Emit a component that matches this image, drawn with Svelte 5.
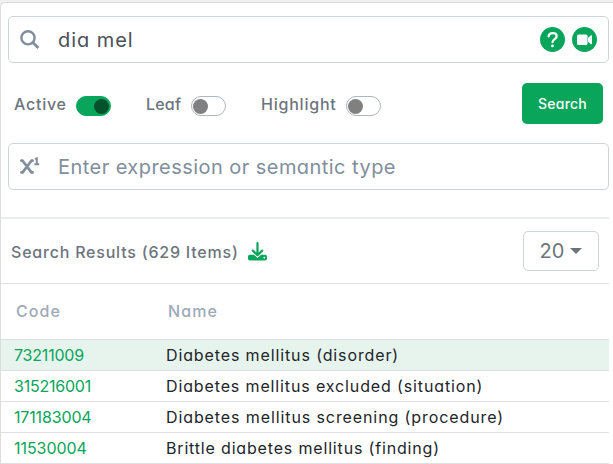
<script>
  let toggles = $state([
    { label: 'Active', on: true, w: 52, gap: 35, ls: 0.75 },
    { label: 'Leaf', on: false, w: 35, gap: 35, ls: 0.2 },
    { label: 'Highlight', on: false, w: 75, gap: 0, ls: 0.78 }
  ]);
  const rows = [
    { code: '73211009', name: 'Diabetes mellitus (disorder)', cs: -0.2, ns: 0.88 },
    { code: '315216001', name: 'Diabetes mellitus excluded (situation)', cs: -0.22, ns: 0.87 },
    { code: '171183004', name: 'Diabetes mellitus screening (procedure)', cs: -0.15, ns: 0.9 },
    { code: '11530004', name: 'Brittle diabetes mellitus (finding)', cs: -0.05, ns: 0.83 }
  ];
</script>

<main>
  <section class="card">
    <div class="field">
      <svg class="lead" width="20" height="20" viewBox="0 0 20 20" fill="none" stroke="#808e9d" stroke-width="2.4">
        <circle cx="8" cy="7.8" r="6.6" /><path d="M12.8 12.6L18.4 18.1" stroke-width="2.8" />
      </svg>
      <span class="value query">dia mel</span>
      <div class="actions">
        <svg width="25" height="25" viewBox="0 0 25 25">
          <circle cx="12.5" cy="12.5" r="12.5" fill="#08a55b" />
          <path d="M8.6 9.3C8.9 5.4 16.5 4.8 16.7 9.2C16.8 12 12.5 12.1 12.5 15.2" fill="none" stroke="#fff" stroke-width="2.2" stroke-linecap="round" />
          <circle cx="12.5" cy="18.9" r="1.4" fill="#fff" />
        </svg>
        <svg width="25" height="25" viewBox="0 0 25 25">
          <circle cx="12.5" cy="12.5" r="12.5" fill="#08a55b" />
          <rect x="5" y="7.5" width="10.5" height="10.5" rx="1.6" fill="#fff" />
          <path d="M16 10.8L18.7 8.4Q20 7.7 20 9V16.5Q20 17.8 18.7 17L16 14.8Z" fill="#fff" />
        </svg>
      </div>
    </div>

    <div class="filters">
      {#each toggles as t}
        <button class="toggle" style:margin-right="{t.gap}px" onclick={() => (t.on = !t.on)}>
          <span class="label" style:width="{t.w}px" style:letter-spacing="{t.ls}px">{t.label}</span>
          <span class="switch" class:on={t.on}><i></i></span>
        </button>
      {/each}
      <button class="search">Search</button>
    </div>

    <div class="field">
      <svg class="lead" width="20" height="20" viewBox="0 0 20 20" fill="none" stroke="#808e9d">
        <path d="M1.4 3.7H2.6L11.4 15.4H12.6M1.4 15.4H2.6L11.4 3.7H12.6" stroke-width="2.7" stroke-linejoin="round" stroke-linecap="round" />
        <path d="M15 2.2L16.8 1.4V7M14.4 7.2H19.2" stroke-width="2" />
      </svg>
      <span class="value placeholder">Enter expression or semantic type</span>
    </div>

    <div class="results">
      <span class="title">Search Results (629 Items)</span>
      <svg width="19" height="19" viewBox="0 0 19 19">
        <path d="M2 12.8H6L9.5 16L13 12.8H17A2 2 0 0 1 19 14.8V16.5A2 2 0 0 1 17 18.5H2A2 2 0 0 1 0 16.5V14.8A2 2 0 0 1 2 12.8Z" fill="#08a55b" />
        <circle cx="16.3" cy="15.6" r=".9" fill="#fff" />
        <path d="M9.5 1.2V12.8M4.8 8.6L9.5 13.2L14.2 8.6" fill="none" stroke="#08a55b" stroke-width="2.2" stroke-linecap="round" stroke-linejoin="round" />
      </svg>
      <button class="size"><span>20</span><i></i></button>
    </div>

    <div class="row head"><span>Code</span><span>Name</span></div>
    {#each rows as r, i}
      <div class="row" class:selected={i === 0}>
        <span class="code"><b style:letter-spacing="{r.cs}px">{r.code}</b></span>
        <span style:letter-spacing="{r.ns}px">{r.name}</span>
      </div>
    {/each}
  </section>
</main>

<style>
  :global(body) { background: #fff; }
  main {
    width: 613px; height: 464px; overflow: hidden; box-sizing: border-box;
    padding-top: 2px; background: linear-gradient(#f0f0f0 6px, #fff 6px);
    font-family: Inter, "Open Sans", sans-serif; font-feature-settings: "cv11";
    font-size: 16px; color: #212529;
  }
  button { font: inherit; font-feature-settings: inherit; border: 0; padding: 0; background: none; color: inherit; }
  .card {
    height: 463px; box-sizing: border-box; background: #fff;
    border: 1px solid #dcdcdf; border-right: 0; border-radius: 5px 0 0 0;
    padding-top: 13px;
  }
  .field {
    margin-left: 7px; width: 601px; height: 47px; box-sizing: border-box;
    border: 1px solid #ced4da; border-radius: 5px;
    display: flex; align-items: center; padding: 0 11px;
  }
  .lead { margin-right: 18px; flex: none; }
  .value { font-size: 20px; color: #495057; white-space: nowrap; letter-spacing: .45px; }
  .query { letter-spacing: .95px; }
  .placeholder { color: #808e9d; }
  .actions { display: flex; gap: 7px; margin-left: auto; }
  .filters { height: 80px; display: flex; align-items: center; padding-left: 13px; }
  .toggle { display: flex; align-items: center; }
  .label { font-weight: 500; color: #6c757d; text-align: left; margin-right: 10px; white-space: nowrap; padding-top: 1px; }
  .switch {
    width: 35px; height: 20px; box-sizing: border-box; border: 1px solid #adb5bd; border-radius: 10px;
    display: flex; align-items: center; padding: 0 1px; margin-top: 6px;
  }
  .switch i { width: 15px; height: 15px; border-radius: 50%; background: #808080; }
  .switch.on { background: #08a55b; border-color: #08a55b; justify-content: flex-end; }
  .switch.on i { background: #04522d; }
  .search {
    margin-left: auto; margin-right: 10px; width: 81px; height: 41px; border-radius: 5px;
    background: #08a55b; color: #fff; font-size: 14px; font-weight: 500; letter-spacing: .2px;
  }
  .results {
    margin-top: 27px; width: 608px; height: 67px; box-sizing: border-box;
    border-top: 2px solid #e9edf2; border-bottom: 1px solid #dcdfe3;
    display: flex; align-items: center; padding: 0 10px;
  }
  .title { font-weight: 500; color: #6c757d; width: 237px; white-space: nowrap; letter-spacing: .79px; padding-top: 2px; }
  .size {
    margin-left: auto; width: 76px; height: 40px; border: 1px solid #ced4da; border-radius: 5px;
    display: flex; align-items: center; justify-content: center; gap: 6px; font-size: 20px; color: #6c757d;
  }
  .size i { border: 6px solid transparent; border-top-color: #6c757d; border-bottom: 0; }
  .row {
    width: 608px; height: 31px; box-sizing: border-box; border-bottom: 1px solid #dcdfe3;
    display: flex; align-items: center; padding-left: 13px; white-space: nowrap;
  }
  .row > span:first-child { width: 152px; }
  .head { height: 56px; color: #9ea9b9; font-weight: 500; padding-left: 15px; padding-bottom: 2px; letter-spacing: 1.1px; }
  .code { color: #08a55b; }
  .code b { font-weight: 400; }
  .selected { background: #e6f4ed; }
</style>
